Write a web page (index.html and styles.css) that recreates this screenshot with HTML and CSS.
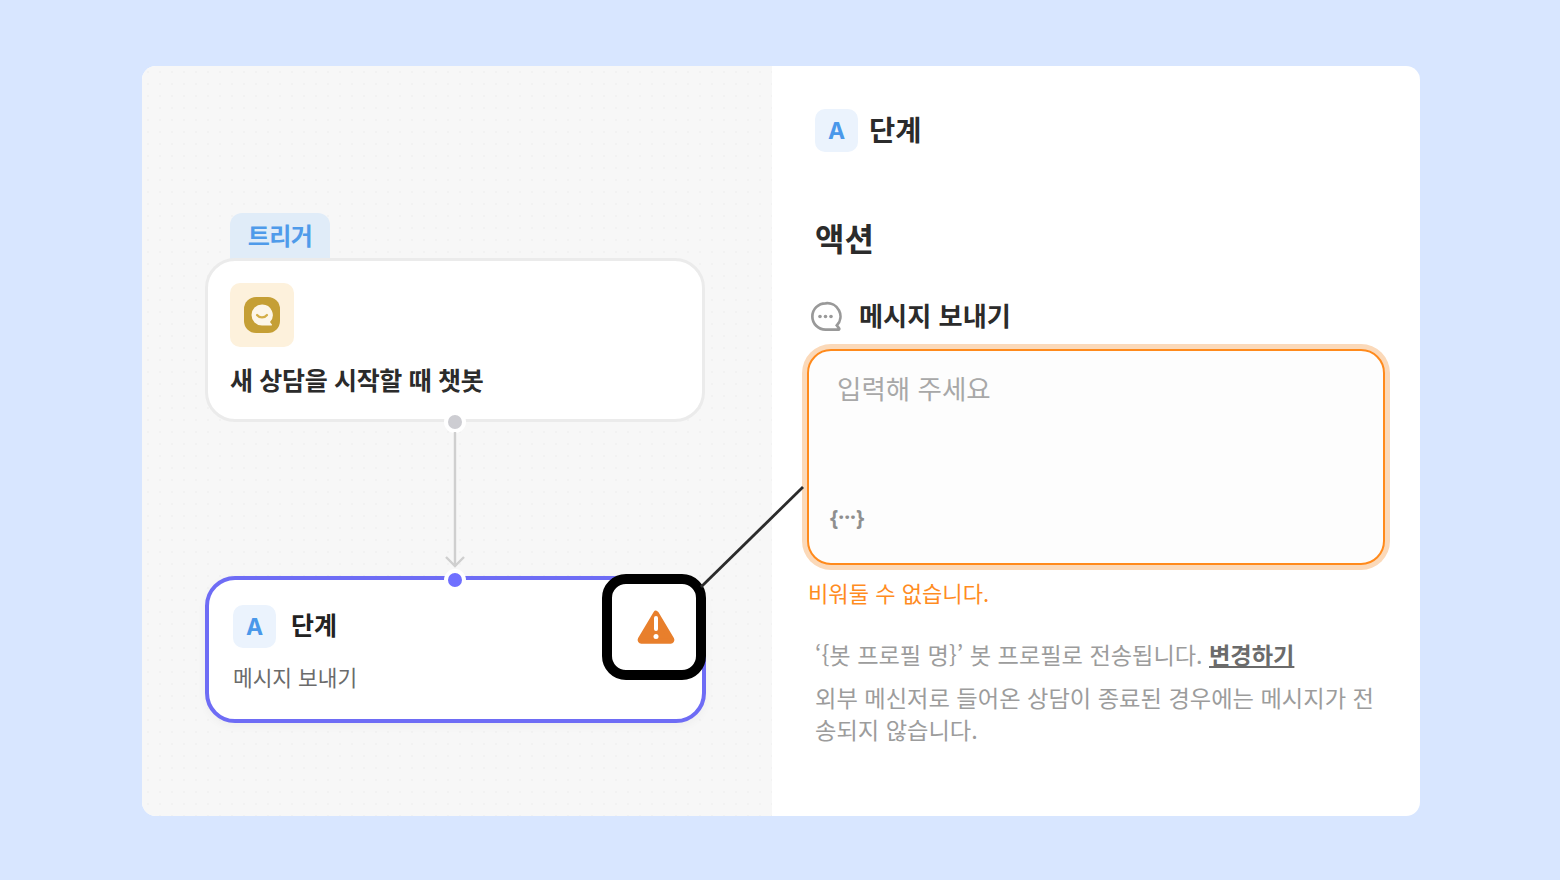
FILE: index.html
```html
<!DOCTYPE html>
<html lang="ko">
<head>
<meta charset="utf-8">
<title>단계</title>
<link rel="stylesheet" href="styles.css">
</head>
<body>
<main class="card">
  <section class="canvas">
    <div class="tab">트리거</div>
    <div class="node trigger">
      <div class="trigger-icon">
        <svg width="38" height="38" viewBox="0 0 38 38"><rect x="1" y="1" width="36" height="36" rx="12" fill="#c59f35"/><path d="M19 8.500a10.500 10.500 0 1 0 0 21h9.500a.6.6 0 0 0 .4-1l-1.900-2.400a10.500 10.500 0 0 0-8-17.600z" fill="#fdf6e8"/><path d="M14 19c2.500 3.200 7.500 3.200 10 0" fill="none" stroke="#d4ae48" stroke-width="2.200" stroke-linecap="round"/></svg>
      </div>
      <div class="trigger-title">새 상담을 시작할 때 챗봇</div>
    </div>
    <span class="dot dot-gray"></span>
    <svg class="arrow" width="24" height="136" viewBox="0 0 24 136"><path d="M12 0v134M3 125l9 9 9-9" fill="none" stroke="#cfcfcf" stroke-width="2.400"/></svg>
    <div class="node step">
      <div class="step-head"><span class="badge">A</span><span class="step-title">단계</span></div>
      <div class="step-sub">메시지 보내기</div>
    </div>
    <span class="dot dot-purple"></span>
    <div class="warn">
      <svg width="40" height="36" viewBox="0 0 40 36"><path d="M20 4.500 35.500 30.500a1 1 0 0 1-1 1.500H5.500a1 1 0 0 1-1-1.500z" fill="#e87f2c" stroke="#e87f2c" stroke-width="5.500" stroke-linejoin="round"/><rect x="18" y="7" width="4" height="15" rx="2" fill="#fff"/><circle cx="20" cy="27.500" r="2.500" fill="#fff"/></svg>
    </div>
  </section>
  <section class="panel">
    <header class="panel-head"><span class="badge">A</span><h1 class="panel-title">단계</h1></header>
    <h2 class="action-title">액션</h2>
    <div class="msg-row">
      <svg width="32" height="32" viewBox="0 0 32 32"><path d="M15.500 4.300a13.150 13.150 0 1 0 0 26.300h13a.8.8 0 0 0 .6-1.300l-2.300-2.900A13.150 13.150 0 0 0 15.500 4.300z" fill="none" stroke="#999" stroke-width="2.700"/><circle cx="10" cy="17.500" r="1.800" fill="#999"/><circle cx="15.500" cy="17.500" r="1.800" fill="#999"/><circle cx="21" cy="17.500" r="1.800" fill="#999"/></svg>
      <span class="msg-label">메시지 보내기</span>
    </div>
    <div class="field">
      <div class="placeholder">입력해 주세요</div>
      <div class="vars">{···}</div>
    </div>
    <p class="error">비워둘 수 없습니다.</p>
    <p class="info first">‘{봇 프로필 명}’ 봇 프로필로 전송됩니다. <a class="link">변경하기</a></p>
    <p class="info">외부 메신저로 들어온 상담이 종료된 경우에는 메시지가 전송되지 않습니다.</p>
  </section>
  <svg class="leader" width="110" height="108" viewBox="0 0 110 108"><path d="M2 106 104 6" stroke="#2b2b2b" stroke-width="2.800"/></svg>
</main>
</body>
</html>
```
FILE: styles.css
```css
* { box-sizing: border-box; }
html, body { margin: 0; height: 100%; }
body {
  background: #d8e6ff;
  font-family: "Noto Sans CJK KR", "Noto Sans", sans-serif;
  overflow: hidden;
  padding: 66px 140px 64px 142px;
}
.card {
  position: relative;
  display: flex;
  width: 1278px;
  height: 750px;
  border-radius: 14px;
  overflow: hidden;
  background: #fff;
}
.canvas {
  position: relative;
  width: 630px;
  flex: none;
  background-color: #f7f7f7;
  background-image: radial-gradient(circle, #f2f2f2 1px, transparent 1.200px);
  background-size: 12px 12px;
}
.tab {
  position: absolute;
  left: 88px;
  top: 147px;
  width: 100px;
  height: 48px;
  padding-top: 4px;
  border-radius: 12px 12px 0 0;
  background: #e0ecf8;
  color: #4f9bea;
  font-size: 24px;
  letter-spacing: -.6px;
  line-height: 35px;
  font-weight: 700;
  text-align: center;
}
.node {
  position: absolute;
  left: 63px;
  background: #fff;
}
.trigger {
  top: 192px;
  width: 500px;
  height: 164px;
  padding: 22px 22px;
  border: 3px solid #ebebeb;
  border-radius: 30px;
}
.trigger-icon {
  display: flex;
  align-items: center;
  justify-content: center;
  width: 64px;
  height: 64px;
  border-radius: 10px;
  background: #fdf1dc;
}
.trigger-title {
  margin-top: 14px;
  font-size: 25px;
  letter-spacing: -.33px;
  line-height: 36px;
  font-weight: 700;
  color: #2b2b2b;
}
.dot {
  position: absolute;
  width: 22px;
  height: 22px;
  border-radius: 50%;
  border: 4px solid #fff;
}
.dot-gray { left: 302px; top: 345px; background: #cdcdd2; }
.dot-purple { left: 302px; top: 503px; background: #7070ff; }
.arrow { position: absolute; left: 301px; top: 366px; }
.step {
  top: 510px;
  width: 501px;
  height: 147px;
  padding: 25px 24px;
  border: 4px solid #6e6cf5;
  border-radius: 30px;
  box-shadow: 0 3px 10px rgba(0, 0, 0, .04);
}
.step-head { display: flex; align-items: center; gap: 15px; }
.badge {
  display: flex;
  align-items: center;
  justify-content: center;
  flex: none;
  width: 43px;
  height: 43px;
  border-radius: 10px;
  background: #ebf3fd;
  color: #4a98ea;
  font-family: "Inter", "Noto Sans", sans-serif;
  font-size: 23px;
  font-weight: 700;
}
.step-title { padding-bottom: 5px; font-size: 25px; font-weight: 700; color: #222; line-height: 36px; }
.step-sub { margin-top: 14px; font-size: 21.400px; line-height: 30px; color: #6b6b6b; }
.warn {
  position: absolute;
  left: 460px;
  top: 508px;
  display: flex;
  align-items: center;
  justify-content: center;
  width: 104px;
  height: 106px;
  padding-left: 3px;
  background: #fff;
  border: 10px solid #000;
  border-radius: 24px;
}
.panel { flex: 1; padding: 43px 34px 0 43px; min-width: 0; }
.panel-head { display: flex; align-items: center; gap: 11px; height: 43px; }
.panel-title { margin: 0; padding-bottom: 4px; font-size: 28.500px; font-weight: 700; color: #2b2b2b; line-height: 40px; }
.action-title { margin: 62px 0 0; font-size: 32px; line-height: 46px; font-weight: 700; color: #2b2b2b; }
.msg-row { display: flex; align-items: center; gap: 17px; margin: 35px 0 0 -5px; height: 40px; }
.msg-label { font-size: 26.200px; font-weight: 700; color: #2b2b2b; line-height: 40px; }
.field {
  position: relative;
  display: flex;
  flex-direction: column;
  justify-content: space-between;
  width: 578px;
  height: 216px;
  margin: 14px 0 0 -8px;
  padding: 18px 28px 31px;
  border: 2.500px solid #ff8a1c;
  border-radius: 24px;
  background: #fdfdfd;
  box-shadow: 0 0 0 5px #fbd9b9;
}
.placeholder { font-size: 26.500px; line-height: 38px; color: #a8a8a8; }
.vars {
  margin-left: -7px;
  font-family: "Noto Sans", sans-serif;
  font-size: 21px;
  line-height: 30px;
  font-weight: 700;
  color: #8f8f8f;
}
.error { margin: 10px 0 0 -7px; font-size: 22.100px; line-height: 34px; color: #ff8c1f; }
.info { margin: 0; font-size: 23.250px; line-height: 32px; color: #9c9c9c; }
.info.first { margin: 28px 0 10px; font-size: 23.200px; line-height: 34px; }
.link { font-weight: 700; color: #6b6b6b; text-decoration: underline; }
.leader { position: absolute; left: 557px; top: 415px; }
```
